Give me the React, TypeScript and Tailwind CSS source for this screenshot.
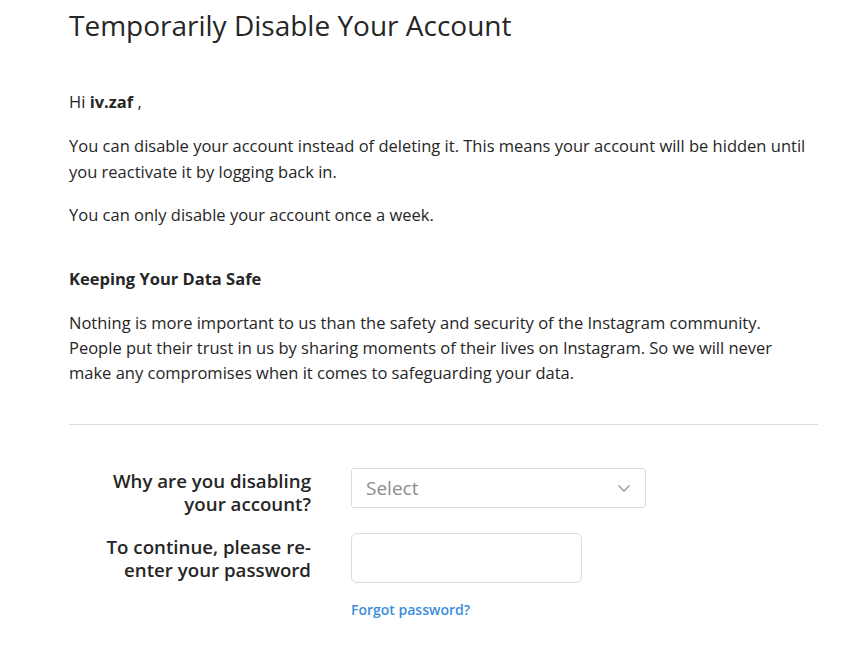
import React from 'react';

const App: React.FC = () => {
  return (
    <div className="min-h-[650px] w-[844px] bg-white text-[#262626]" style={{ fontFamily: '"Open Sans", "Noto Sans", sans-serif' }}>
      <div className="ml-[69px] w-[749px]">
        <h1 className="pt-[6px] text-[28px] font-normal leading-[38px] text-[#262626]">
          Temporarily Disable Your Account
        </h1>

        <p className="mt-[45px] text-[16.5px] leading-[26px]">
          Hi <span className="font-bold">iv.zaf</span> ,
        </p>

        <p className="mt-[18px] text-[16.5px] leading-[26px]">
          You can disable your account instead of deleting it. This means your account will be hidden until
          <br />
          you reactivate it by logging back in.
        </p>

        <p className="mt-[17px] text-[16.5px] leading-[26px]">You can only disable your account once a week.</p>

        <h2 className="mt-[38px] text-[16.5px] font-bold leading-[26px]">Keeping Your Data Safe</h2>

        <p className="mt-[18px] text-[16.5px] leading-[25px]">
          Nothing is more important to us than the safety and security of the Instagram community.
          <br />
          People put their trust in us by sharing moments of their lives on Instagram. So we will never
          <br />
          make any compromises when it comes to safeguarding your data.
        </p>

        <hr className="mt-[39px] border-t border-[#dbdbdb]" />

        <form className="mt-[43px] grid grid-cols-[242px_1fr] gap-x-[40px]">
          <label className="pl-[20px] pt-[1px] text-right text-[18.7px] font-semibold leading-[23px]">
            Why are you disabling your account?
          </label>
          <div className="relative h-[40px] w-[295px]">
            <select className="h-full w-full appearance-none rounded-[3px] border border-[#dbdbdb] bg-white pl-[14px] text-[19px] text-[#8e8e8e] outline-none">
              <option>Select</option>
            </select>
            <svg
              className="pointer-events-none absolute right-[15px] top-[15px]"
              width="14"
              height="10"
              viewBox="0 0 14 10"
              fill="none"
            >
              <path d="M1.5 2.5 L7 8 L12.5 2.5" stroke="#9a9a9a" strokeWidth="1.4" />
            </svg>
          </div>

          <label className="mt-[17px] pl-[20px] pt-[3px] text-right text-[18.7px] font-semibold leading-[23px]">
            To continue, please re-enter your password
          </label>
          <div className="mt-[18px]">
            <input
              type="password"
              className="h-[50px] w-[231px] rounded-[6px] border border-[#dbdbdb] bg-white px-3 outline-none"
            />
            <a href="#" className="mt-[18px] block text-[14px] font-semibold leading-[18px] text-[#3a8edb]">
              Forgot password?
            </a>
          </div>
        </form>
      </div>
    </div>
  );
};

export default App;
